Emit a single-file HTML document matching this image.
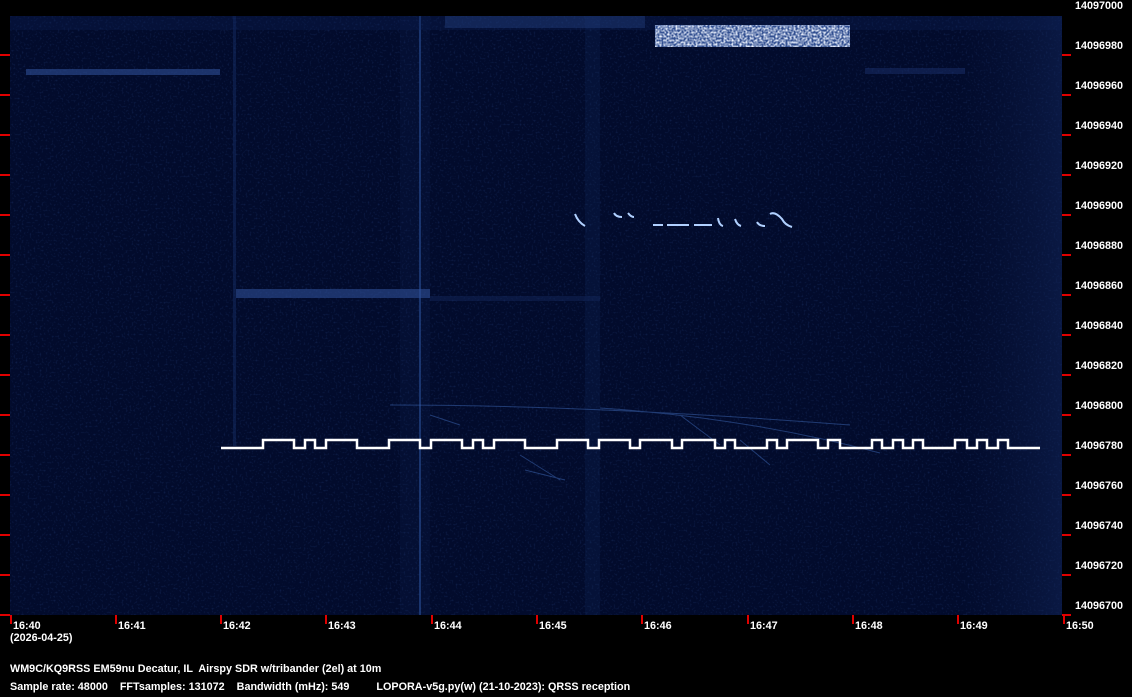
<!DOCTYPE html>
<html><head><meta charset="utf-8"><style>
html,body{margin:0;padding:0;background:#000;}
body{width:1132px;height:697px;position:relative;overflow:hidden;font-family:"Liberation Sans",sans-serif;font-weight:bold;font-size:10.8px;color:#fff;}
.t{position:absolute;white-space:pre;line-height:12px;}
</style></head><body>
<svg width="1132" height="697" style="position:absolute;left:0;top:0">
<defs>
<filter id="n" x="0" y="0" width="100%" height="100%">
<feTurbulence type="fractalNoise" baseFrequency="0.5" numOctaves="1" seed="3"/>
<feColorMatrix values="0 0 0 0 0.04  0 0 0 0 0.12  0 0 0 0 0.42  0 0 0 0.7 -0.38"/>
</filter>
<filter id="b" x="0" y="0" width="100%" height="100%">
<feTurbulence type="fractalNoise" baseFrequency="0.5" numOctaves="1" seed="7"/>
<feColorMatrix values="0 0 0 0 0.85  0 0 0 0 0.9  0 0 0 0 1  0 0 0 2.2 -0.7"/>
</filter>
<linearGradient id="rg" x1="0" x2="1">
<stop offset="0" stop-color="#0b1a44" stop-opacity="0"/>
<stop offset="1" stop-color="#12265a" stop-opacity="0.5"/>
</linearGradient>
</defs>
<rect x="10" y="16" width="1052" height="599" fill="#020b2c"/>
<rect x="10" y="16" width="1052" height="599" filter="url(#n)"/>
<rect x="960" y="16" width="102" height="599" fill="url(#rg)"/>
<rect x="585" y="16" width="15" height="599" fill="#16306a" opacity="0.2"/>
<rect x="400" y="16" width="30" height="599" fill="#14295e" opacity="0.15"/>
<rect x="233" y="16" width="3" height="430" fill="#1a3570" opacity="0.4"/>
<rect x="419" y="16" width="2" height="599" fill="#2a4f96" opacity="0.6"/>
<rect x="10" y="16" width="1052" height="14" fill="#0e2256" opacity="0.3"/>
<rect x="445" y="16" width="200" height="12" fill="#2a4a90" opacity="0.35"/>
<rect x="655" y="25" width="195" height="22" fill="#3a5ca8" opacity="0.8"/>
<rect x="655" y="25" width="195" height="22" filter="url(#b)"/>
<rect x="26" y="69" width="194" height="6" fill="#2e4f96" opacity="0.6"/>
<rect x="865" y="68" width="100" height="6" fill="#1c3470" opacity="0.45"/>
<rect x="236" y="289" width="194" height="9" fill="#2e4f96" opacity="0.6"/>
<rect x="430" y="296" width="170" height="5" fill="#15295e" opacity="0.45"/>
<g stroke="#b0d0ff" stroke-width="2" fill="none">
<path d="M575 214 q3 8 10 12 M614 213 q2 4 8 4 M628 213 q3 4 6 4 M653 225 h10 M667 225 h22 M694 225 h18 M718 218 q1 7 5 8 M735 219 q2 6 6 7 M757 222 q2 4 8 4 M770 214 q5 -3 12 5 q3 6 10 8"/>
</g>
<g stroke="#3e6ab8" stroke-width="1" fill="none" opacity="0.5">
<path d="M390 405 q200 0 460 20 M430 415 l30 10 M520 455 l40 25 M600 408 q150 10 280 45 M680 415 l40 30 M740 440 l30 25 M525 470 l40 10"/>
</g>
<polyline fill="none" stroke="#fff" stroke-width="2.5" points="221,448 263,448 263,440 294,440 294,448 305,448 305,440 315,440 315,448 326,448 326,440 357,440 357,448 389,448 389,440 420,440 420,448 431,448 431,440 462,440 462,448 473,448 473,440 483,440 483,448 494,448 494,440 525,440 525,448 557,448 557,440 588,440 588,448 599,448 599,440 630,440 630,448 640,448 640,440 672,440 672,448 682,448 682,440 715,440 715,448 725,448 725,440 735,440 735,448 767,448 767,440 777,440 777,448 787,448 787,440 818,440 818,448 828,448 828,440 840,440 840,448 872,448 872,440 882,440 882,448 893,448 893,440 903,440 903,448 913,448 913,440 923,440 923,448 955,448 955,440 967,440 967,448 977,448 977,440 987,440 987,448 998,448 998,440 1008,440 1008,448 1040,448"/>
<g fill="#e00000">
<rect x="0" y="54" width="10" height="2"/><rect x="0" y="94" width="10" height="2"/><rect x="0" y="134" width="10" height="2"/><rect x="0" y="174" width="10" height="2"/><rect x="0" y="214" width="10" height="2"/><rect x="0" y="254" width="10" height="2"/><rect x="0" y="294" width="10" height="2"/><rect x="0" y="334" width="10" height="2"/><rect x="0" y="374" width="10" height="2"/><rect x="0" y="414" width="10" height="2"/><rect x="0" y="454" width="10" height="2"/><rect x="0" y="494" width="10" height="2"/><rect x="0" y="534" width="10" height="2"/><rect x="0" y="574" width="10" height="2"/><rect x="0" y="614" width="10" height="2"/>
<rect x="1062" y="54" width="9" height="2"/><rect x="1062" y="94" width="9" height="2"/><rect x="1062" y="134" width="9" height="2"/><rect x="1062" y="174" width="9" height="2"/><rect x="1062" y="214" width="9" height="2"/><rect x="1062" y="254" width="9" height="2"/><rect x="1062" y="294" width="9" height="2"/><rect x="1062" y="334" width="9" height="2"/><rect x="1062" y="374" width="9" height="2"/><rect x="1062" y="414" width="9" height="2"/><rect x="1062" y="454" width="9" height="2"/><rect x="1062" y="494" width="9" height="2"/><rect x="1062" y="534" width="9" height="2"/><rect x="1062" y="574" width="9" height="2"/><rect x="1062" y="614" width="9" height="2"/>
<rect x="10" y="615" width="2" height="9"/><rect x="115" y="615" width="2" height="9"/><rect x="220" y="615" width="2" height="9"/><rect x="325" y="615" width="2" height="9"/><rect x="431" y="615" width="2" height="9"/><rect x="536" y="615" width="2" height="9"/><rect x="641" y="615" width="2" height="9"/><rect x="747" y="615" width="2" height="9"/><rect x="852" y="615" width="2" height="9"/><rect x="957" y="615" width="2" height="9"/><rect x="1063" y="615" width="2" height="9"/>
</g>
</svg>
<div class="t" style="left:1075px;top:0px">14097000</div>
<div class="t" style="left:1075px;top:40px">14096980</div>
<div class="t" style="left:1075px;top:80px">14096960</div>
<div class="t" style="left:1075px;top:120px">14096940</div>
<div class="t" style="left:1075px;top:160px">14096920</div>
<div class="t" style="left:1075px;top:200px">14096900</div>
<div class="t" style="left:1075px;top:240px">14096880</div>
<div class="t" style="left:1075px;top:280px">14096860</div>
<div class="t" style="left:1075px;top:320px">14096840</div>
<div class="t" style="left:1075px;top:360px">14096820</div>
<div class="t" style="left:1075px;top:400px">14096800</div>
<div class="t" style="left:1075px;top:440px">14096780</div>
<div class="t" style="left:1075px;top:480px">14096760</div>
<div class="t" style="left:1075px;top:520px">14096740</div>
<div class="t" style="left:1075px;top:560px">14096720</div>
<div class="t" style="left:1075px;top:600px">14096700</div>
<div class="t" style="left:13px;top:620px">16:40</div>
<div class="t" style="left:118px;top:620px">16:41</div>
<div class="t" style="left:223px;top:620px">16:42</div>
<div class="t" style="left:328px;top:620px">16:43</div>
<div class="t" style="left:434px;top:620px">16:44</div>
<div class="t" style="left:539px;top:620px">16:45</div>
<div class="t" style="left:644px;top:620px">16:46</div>
<div class="t" style="left:750px;top:620px">16:47</div>
<div class="t" style="left:855px;top:620px">16:48</div>
<div class="t" style="left:960px;top:620px">16:49</div>
<div class="t" style="left:1066px;top:620px">16:50</div>
<div class="t" style="left:10px;top:632px">(2026-04-25)</div>
<div class="t" style="left:10px;top:663px">WM9C/KQ9RSS EM59nu Decatur, IL  Airspy SDR w/tribander (2el) at 10m</div>
<div class="t" style="left:10px;top:681px">Sample rate: 48000    FFTsamples: 131072    Bandwidth (mHz): 549         LOPORA-v5g.py(w) (21-10-2023): QRSS reception</div>
</body></html>
